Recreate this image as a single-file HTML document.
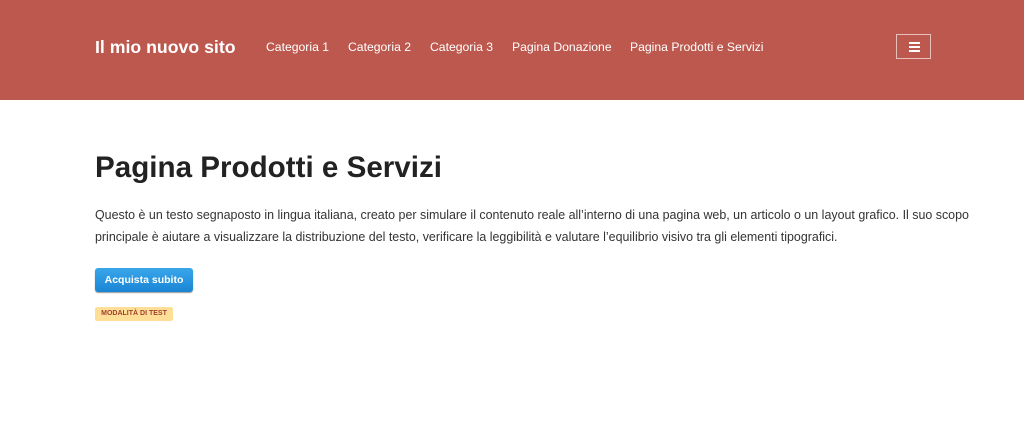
<!DOCTYPE html>
<html><head><meta charset="utf-8"><style>
body{margin:0;width:1024px;height:425px;background:#fff;font-family:"Liberation Sans",Arial,sans-serif;overflow:hidden}
.hdr{position:absolute;left:0;top:0;width:1024px;height:100px;background:#bd584e}
.logo{position:absolute;left:95px;top:37px;color:#fff;font-weight:bold;font-size:17.7px;white-space:nowrap}
.nav{position:absolute;top:40px;color:#fff;font-size:12.2px;white-space:nowrap}
.burger{position:absolute;left:896px;top:34px;width:35px;height:25px;border:1px solid #e8c0bb;box-sizing:border-box}
.burger i{position:absolute;left:12px;width:11px;height:2px;background:#fff}
h1{position:absolute;left:95px;top:151px;margin:0;font-size:29.6px;color:#222;font-weight:bold;white-space:nowrap}
p{position:absolute;left:95px;top:205px;margin:0;width:900px;font-size:12.45px;line-height:21.5px;color:#333}
.btn{position:absolute;left:95px;top:268px;width:98px;height:24px;border-radius:3px;background:linear-gradient(#3aa6ea,#1a85d4);color:#fff;font-weight:bold;font-size:10.5px;text-align:center;line-height:24px;box-shadow:0 1px 1px #999}
.badge{position:absolute;left:95px;top:307px;width:78px;height:14px;background:#ffdf98;color:#a0402a;font-weight:bold;font-size:7px;text-align:center;line-height:14px;border-radius:2px;white-space:nowrap}
</style></head><body>
<div class="hdr">
<div class="logo">Il mio nuovo sito</div>
<div class="nav" style="left:266px">Categoria 1</div>
<div class="nav" style="left:348px">Categoria 2</div>
<div class="nav" style="left:430px">Categoria 3</div>
<div class="nav" style="left:512px">Pagina Donazione</div>
<div class="nav" style="left:630px">Pagina Prodotti e Servizi</div>
<div class="burger"><i style="top:7px"></i><i style="top:11px"></i><i style="top:15px"></i></div>
</div>
<h1>Pagina Prodotti e Servizi</h1>
<p>Questo è un testo segnaposto in lingua italiana, creato per simulare il contenuto reale all’interno di una pagina web, un articolo o un layout grafico. Il suo scopo<br>principale è aiutare a visualizzare la distribuzione del testo, verificare la leggibilità e valutare l’equilibrio visivo tra gli elementi tipografici.</p>
<div class="btn">Acquista subito</div>
<div class="badge">MODALITÀ DI TEST</div>
</body></html>
